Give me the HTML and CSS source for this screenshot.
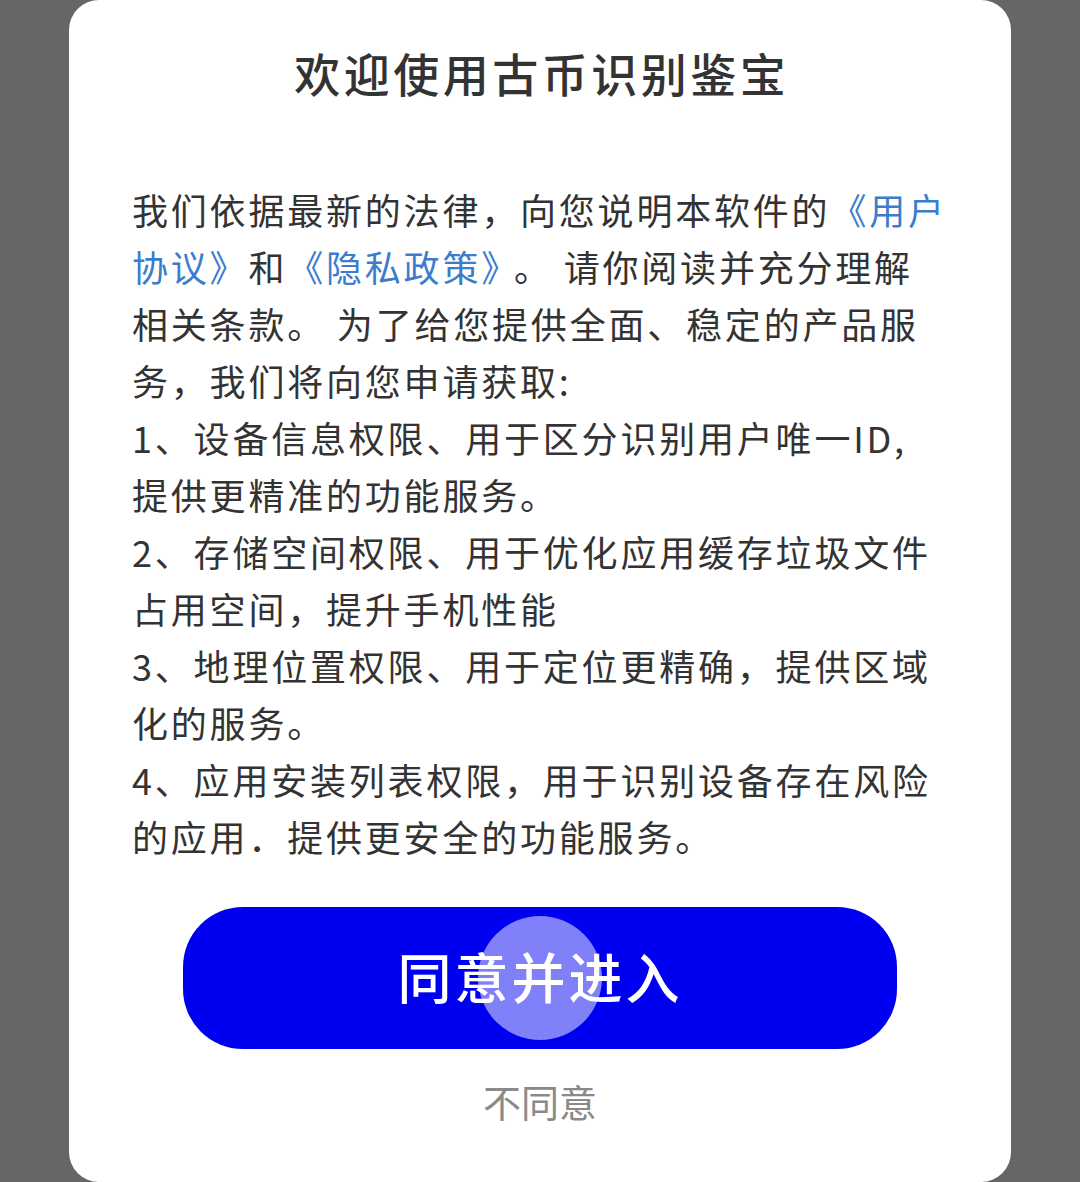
FILE: index.html
```html
<!DOCTYPE html>
<html lang="zh-CN">
<head>
<meta charset="utf-8">
<title>欢迎使用古币识别鉴宝</title>
<link rel="stylesheet" href="styles.css">
</head>
<body>
<div class="dialog">
  <h1 class="title">欢迎使用古币识别鉴宝</h1>
  <div class="content">
    <p class="line">我们依据最新的法律，向您说明本软件的<a class="link">《用户<br>协议》</a>和<a class="link">《隐私政策》</a><span class="gap">。</span> 请你阅读并充分理解<br>相关条款。 为了给您提供全面、稳定的产品服<br>务，我们将向您申请获取:</p>
    <p class="line">1、设备信息权限、用于区分识别用户唯一ID,<br>提供更精准的功能服务。</p>
    <p class="line">2、存储空间权限、用于优化应用缓存垃圾文件<br>占用空间，提升手机性能</p>
    <p class="line">3、地理位置权限、用于定位更精确，提供区域<br>化的服务。</p>
    <p class="line">4、应用安装列表权限，用于识别设备存在风险<br>的应用．提供更安全的功能服务。</p>
  </div>
  <button class="agree"><span class="ripple"></span><span class="agree-text">同意并进入</span></button>
  <div class="disagree">不同意</div>
</div>
</body>
</html>
```
FILE: styles.css
```css
html, body {
  margin: 0;
  padding: 0;
  background: #666666;
  height: 1182px;
  overflow: hidden;
}
body {
  font-family: "Noto Sans CJK SC", "Noto Sans", sans-serif;
}
.dialog {
  width: 942px;
  height: 1182px;
  margin-left: 69px;
  background: #ffffff;
  border-radius: 30px;
  box-sizing: border-box;
  padding: 42px 63px 0 63px;
  display: flex;
  flex-direction: column;
  align-items: stretch;
}
.title {
  margin: 0;
  font-size: 46px;
  line-height: 60px;
  font-weight: 500;
  color: #333333;
  text-align: center;
  letter-spacing: 3.5px;
  text-indent: 3.5px;
}
.content {
  margin-top: 79px;
  font-size: 36px;
  line-height: 57px;
  color: #333333;
  letter-spacing: 2.8px;
  white-space: nowrap;
}
.line {
  margin: 0;
}
.link {
  color: #3b7dcc;
  text-decoration: none;
}
.gap {
  margin-left: 12px;
}
.agree {
  position: relative;
  align-self: center;
  width: 714px;
  height: 142px;
  margin-top: 42px;
  border: none;
  border-radius: 60px;
  background: #0000f0;
  color: #ffffff;
  font-family: "Noto Sans CJK SC", "Noto Sans", sans-serif;
  font-size: 54px;
  font-weight: 500;
  letter-spacing: 3px;
  padding: 0 0 6px 0;
  overflow: hidden;
}
.ripple {
  position: absolute;
  left: 295px;
  top: 9px;
  width: 124px;
  height: 124px;
  border-radius: 50%;
  background: rgba(255, 255, 255, 0.5);
}
.agree-text {
  position: relative;
  text-indent: 3px;
}
.disagree {
  margin-top: 27px;
  text-align: center;
  font-size: 38px;
  line-height: 50px;
  color: #8a8a8a;
}
```
